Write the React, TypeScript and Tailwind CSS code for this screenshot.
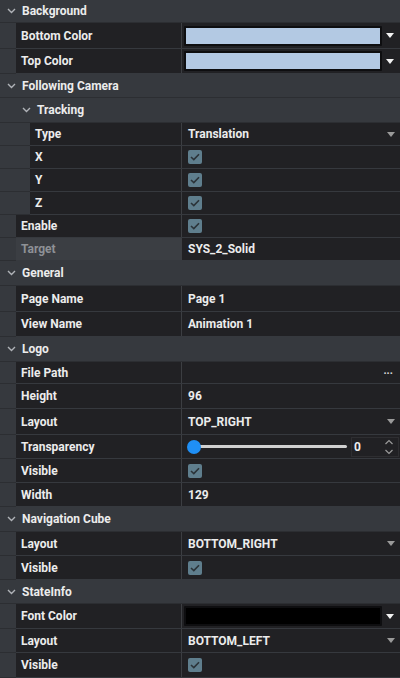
import React from "react";

const FONT = { fontFamily: "Roboto, 'Liberation Sans', sans-serif" };

function Chevron() {
  return (
    <svg width="9" height="6" viewBox="0 0 9 6" className="shrink-0">
      <path d="M1 1 L4.5 4.5 L8 1" fill="none" stroke="#b0b3b8" strokeWidth="1.4" />
    </svg>
  );
}

function Tri({ color = "#9a9a9a" }: { color?: string }) {
  return (
    <svg width="8" height="5" viewBox="0 0 8 5" className="shrink-0">
      <path d="M0 0 L8 0 L4 5 Z" fill={color} />
    </svg>
  );
}

function Check() {
  return (
    <div className="w-[14px] h-[14px] rounded-[2px] bg-[#5f7e8d] flex items-center justify-center">
      <svg width="10" height="8" viewBox="0 0 10 8">
        <path d="M1 4 L3.8 6.6 L9 1.2" fill="none" stroke="#2b3338" strokeWidth="1.6" />
      </svg>
    </div>
  );
}

function Header({ label, h, indent = 0 }: { label: string; h: number; indent?: number }) {
  return (
    <div
      className="flex items-center bg-[#36393e] border-b border-[#2c2e32] text-[#ececec] font-bold text-[12px]"
      style={{ height: h, paddingLeft: 7 + indent }}
    >
      <Chevron />
      <span className="ml-[6px]">{label}</span>
    </div>
  );
}

type Val =
  | { kind: "text"; text: string; arrow?: boolean; dots?: boolean }
  | { kind: "check" }
  | { kind: "color"; color: string }
  | { kind: "slider" };

function Value({ v }: { v: Val }) {
  if (v.kind === "text")
    return (
      <div className="flex items-center h-full pl-[6px] pr-[5px]">
        <span className="flex-1 text-[#ececec] font-bold text-[12px]">{v.text}</span>
        {v.arrow && <Tri />}
        {v.dots && <span className="text-[#d8d8d8] font-bold text-[11px] leading-none mb-[4px] mr-[2px]">...</span>}
      </div>
    );
  if (v.kind === "check")
    return (
      <div className="flex items-center h-full pl-[6px]">
        <Check />
      </div>
    );
  if (v.kind === "color")
    return (
      <div className="flex items-center h-full pl-[2px] pr-[4px]">
        <div className="w-[198px] h-[20px] border-2 border-[#0e0e10] rounded-[1px]" style={{ background: v.color }} />
        <div className="flex-1 flex justify-center pl-[2px]">
          <Tri color="#f2f2f2" />
        </div>
      </div>
    );
  return (
    <div className="flex items-center h-full pl-[5px]">
      <div className="relative w-[160px] h-[16px] flex items-center">
        <div className="absolute left-[6px] right-0 h-[3px] bg-[#d0d0d0] rounded-full" />
        <div className="relative w-[14px] h-[14px] rounded-full bg-[#1f8ff5]" />
      </div>
      <div className="ml-[4px] w-[48px] h-[20px] border border-[#2e2e31] flex items-center pl-[2px]">
        <span className="flex-1 text-[#ececec] font-bold text-[12px]">0</span>
        <svg width="10" height="16" viewBox="0 0 10 16" className="mr-[4px]">
          <path d="M1.5 5 L5 1.5 L8.5 5" fill="none" stroke="#9a9a9a" strokeWidth="1.2" />
          <path d="M1.5 11 L5 14.5 L8.5 11" fill="none" stroke="#9a9a9a" strokeWidth="1.2" />
        </svg>
      </div>
    </div>
  );
}

function Prop({ label, h, v, indent = 16, muted = false }: { label: string; h: number; v: Val; indent?: number; muted?: boolean }) {
  return (
    <div className="flex" style={{ height: h }}>
      <div className="shrink-0 border-b border-[#2c2e32]" style={{ width: indent }} />
      <div
        className={`flex items-center border-b border-[#36393e] font-bold text-[12px] pl-[5px] ${muted ? "bg-[#3b3e43] text-[#8e9196]" : "bg-[#212124] text-[#ececec]"}`}
        style={{ width: 181 - indent }}
      >
        {label}
      </div>
      <div className="w-[1px] bg-[#3c3e42] border-b border-[#36393e]" />
      <div className="flex-1 bg-[#212124] border-b border-[#36393e]">
        <Value v={v} />
      </div>
    </div>
  );
}

export default function App() {
  const check: Val = { kind: "check" };
  return (
    <div className="w-[400px] h-[678px] overflow-hidden bg-[#36393e]" style={FONT}>
      <Header label="Background" h={23} />
      <Prop label="Bottom Color" h={26} v={{ kind: "color", color: "#b3c9e3" }} />
      <Prop label="Top Color" h={25} v={{ kind: "color", color: "#b3c9e3" }} />
      <Header label="Following Camera" h={24} />
      <Header label="Tracking" h={25} indent={15} />
      <Prop label="Type" h={23} indent={30} v={{ kind: "text", text: "Translation", arrow: true }} />
      <Prop label="X" h={23} indent={30} v={check} />
      <Prop label="Y" h={23} indent={30} v={check} />
      <Prop label="Z" h={23} indent={30} v={check} />
      <Prop label="Enable" h={23} v={check} />
      <Prop label="Target" h={23} muted v={{ kind: "text", text: "SYS_2_Solid" }} />
      <Header label="General" h={25} />
      <Prop label="Page Name" h={26} v={{ kind: "text", text: "Page 1" }} />
      <Prop label="View Name" h={25} v={{ kind: "text", text: "Animation 1" }} />
      <Header label="Logo" h={25} />
      <Prop label="File Path" h={22} v={{ kind: "text", text: "", dots: true }} />
      <Prop label="Height" h={25} v={{ kind: "text", text: "96" }} />
      <Prop label="Layout" h={26} v={{ kind: "text", text: "TOP_RIGHT", arrow: true }} />
      <Prop label="Transparency" h={24} v={{ kind: "slider" }} />
      <Prop label="Visible" h={24} v={check} />
      <Prop label="Width" h={24} v={{ kind: "text", text: "129" }} />
      <Header label="Navigation Cube" h={25} />
      <Prop label="Layout" h={24} v={{ kind: "text", text: "BOTTOM_RIGHT", arrow: true }} />
      <Prop label="Visible" h={24} v={check} />
      <Header label="StateInfo" h={24} />
      <Prop label="Font Color" h={25} v={{ kind: "color", color: "#000000" }} />
      <Prop label="Layout" h={24} v={{ kind: "text", text: "BOTTOM_LEFT", arrow: true }} />
      <Prop label="Visible" h={25} v={check} />
    </div>
  );
}
